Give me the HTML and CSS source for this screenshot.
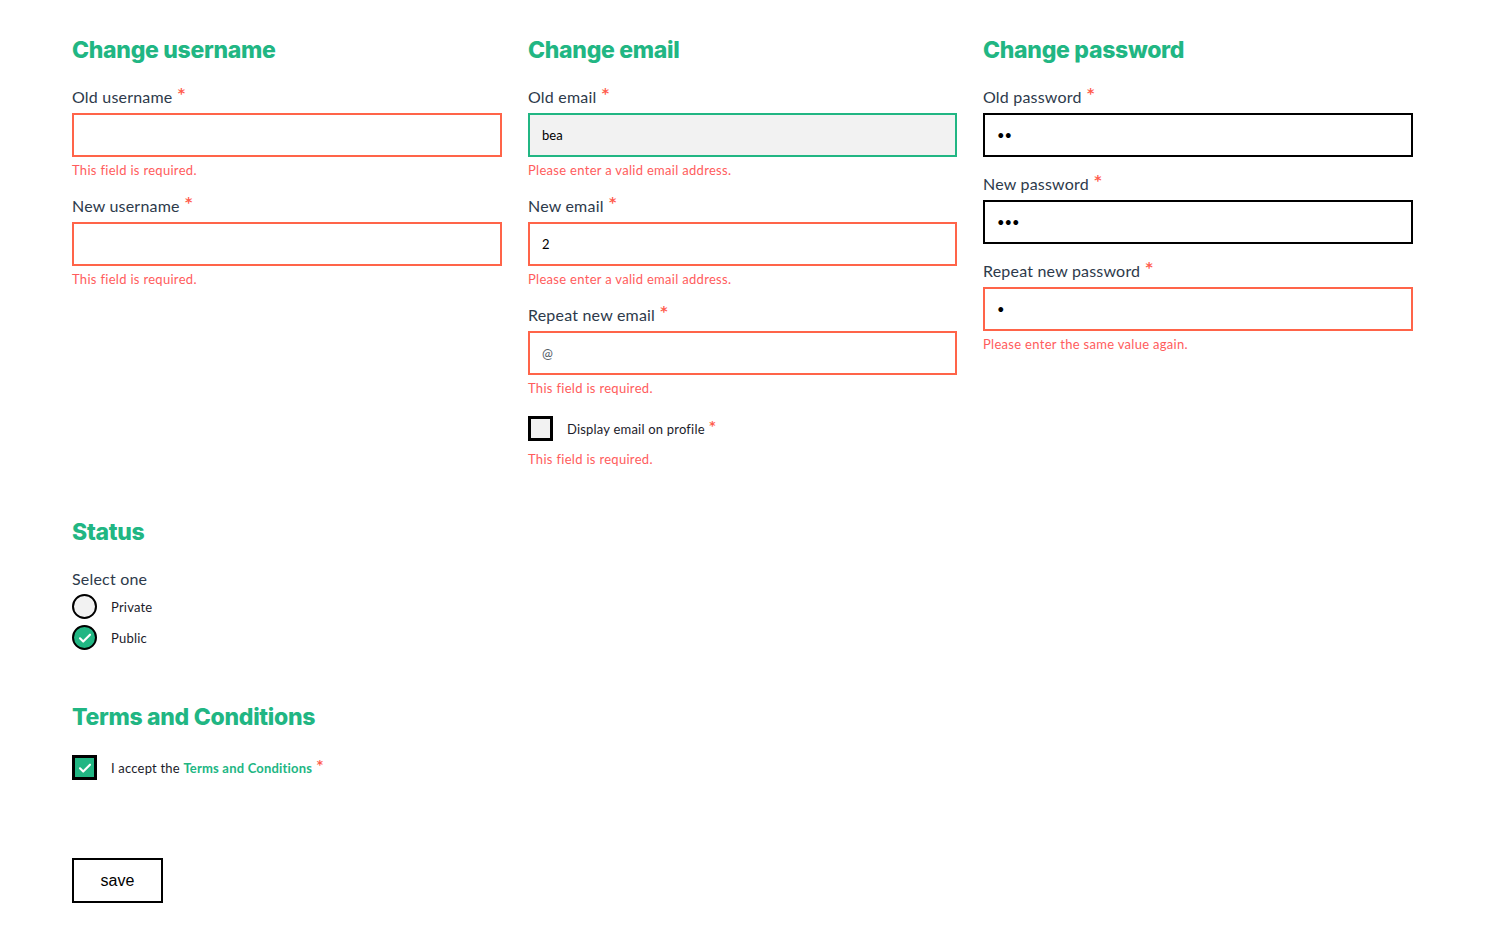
FILE: index.html
```html
<!DOCTYPE html>
<html lang="en">
<head>
<meta charset="utf-8">
<title>Account settings</title>
<link rel="stylesheet" href="styles.css">
</head>
<body>
<form class="page">
  <div class="columns">
    <section class="col">
      <h2 class="title">Change username</h2>
      <div class="field">
        <label class="label">Old username <span class="req">*</span></label>
        <input class="input input-error" type="text">
        <div class="error">This field is required.</div>
      </div>
      <div class="field">
        <label class="label">New username <span class="req">*</span></label>
        <input class="input input-error" type="text">
        <div class="error">This field is required.</div>
      </div>
    </section>
    <section class="col">
      <h2 class="title">Change email</h2>
      <div class="field">
        <label class="label">Old email <span class="req">*</span></label>
        <input class="input input-valid" type="text" value="bea">
        <div class="error">Please enter a valid email address.</div>
      </div>
      <div class="field">
        <label class="label">New email <span class="req">*</span></label>
        <input class="input input-error" type="text" value="2">
        <div class="error">Please enter a valid email address.</div>
      </div>
      <div class="field">
        <label class="label">Repeat new email <span class="req">*</span></label>
        <input class="input input-error" type="text" placeholder="@">
        <div class="error">This field is required.</div>
      </div>
      <div class="field check-field">
        <label class="check-row">
          <span class="box"></span>
          <span class="check-text">Display email on profile <span class="req">*</span></span>
        </label>
        <div class="error error-check">This field is required.</div>
      </div>
    </section>
    <section class="col">
      <h2 class="title">Change password</h2>
      <div class="field">
        <label class="label">Old password <span class="req">*</span></label>
        <input class="input input-plain" type="password" value="ab">
      </div>
      <div class="field">
        <label class="label">New password <span class="req">*</span></label>
        <input class="input input-plain" type="password" value="abc">
      </div>
      <div class="field">
        <label class="label">Repeat new password <span class="req">*</span></label>
        <input class="input input-error" type="password" value="a">
        <div class="error">Please enter the same value again.</div>
      </div>
    </section>
  </div>

  <section class="block status">
    <h2 class="title">Status</h2>
    <div class="label">Select one</div>
    <div class="radios">
      <label class="radio-row">
        <span class="radio"></span>
        <span class="check-text">Private</span>
      </label>
      <label class="radio-row">
        <span class="radio radio-on">
          <svg viewBox="0 0 24 24" width="16" height="16"><path d="M4.5 12.5l4.8 4.8L19.5 7" fill="none" stroke="#fff" stroke-width="3.2" stroke-linecap="round" stroke-linejoin="round"/></svg>
        </span>
        <span class="check-text">Public</span>
      </label>
    </div>
  </section>

  <section class="block terms">
    <h2 class="title">Terms and Conditions</h2>
    <label class="check-row">
      <span class="box box-on">
        <svg viewBox="0 0 24 24" width="16" height="16"><path d="M4.5 12.5l4.8 4.8L19.5 7" fill="none" stroke="#fff" stroke-width="3.2" stroke-linecap="round" stroke-linejoin="round"/></svg>
      </span>
      <span class="check-text">I accept the <a class="link" href="#">Terms and Conditions</a> <span class="req">*</span></span>
    </label>
  </section>

  <div class="actions">
    <button class="save" type="button">save</button>
  </div>
</form>
</body>
</html>
```
FILE: styles.css
```css
html, body {
  margin: 0;
  padding: 0;
  background: #ffffff;
}

body {
  font-family: "Lato", "Noto Sans", sans-serif;
  color: #2d3a4b;
}

.page {
  padding: 35px 0 40px 72px;
}

.columns {
  display: grid;
  grid-template-columns: 430px 429px 430px;
  column-gap: 26px;
  align-items: start;
}

.title {
  margin: 0 0 22px 0;
  font-family: "Inter", "Lato", sans-serif;
  font-size: 23px;
  line-height: 30px;
  font-weight: 800;
  color: #21b683;
  letter-spacing: -0.3px;
}

.field {
  display: flex;
  flex-direction: column;
  margin-bottom: 17px;
}

.field:last-child {
  margin-bottom: 0;
}

.label {
  display: block;
  font-size: 16px;
  line-height: 20px;
  margin-bottom: 6px;
  color: #2d3a4b;
  letter-spacing: 0.2px;
}

.req {
  color: #ff5c4d;
  font-family: "DejaVu Sans", sans-serif;
  font-size: 14px;
  line-height: 0;
  font-weight: 700;
  position: relative;
  top: -5px;
  margin-left: 1px;
}

.check-text .req {
  font-size: 12px;
  top: -4px;
}

.input {
  box-sizing: border-box;
  width: 100%;
  height: 44px;
  padding: 0 12px;
  border: 2px solid #000;
  background: #fff;
  font-family: "Lato", "Noto Sans", sans-serif;
  font-size: 13px;
  color: #000;
  outline: none;
  margin: 0;
}

.input::placeholder {
  color: #555c66;
}

.input-error {
  border-color: #ff6449;
}

.input-valid {
  border-color: #21b683;
  background: #f2f2f2;
}

.input-plain {
  border-color: #000;
}

.error {
  margin-top: 5px;
  font-size: 13px;
  line-height: 17px;
  color: #ff5c5c;
  letter-spacing: 0.3px;
}

.check-field {
  padding-top: 2px;
}

.check-row {
  display: flex;
  align-items: center;
  gap: 14px;
  cursor: pointer;
}

.box {
  box-sizing: border-box;
  width: 25px;
  height: 25px;
  border: 3px solid #000;
  background: #f2f2f2;
  display: flex;
  align-items: center;
  justify-content: center;
  flex: none;
}

.box-on {
  background: #21b683;
}

.check-text {
  font-size: 13px;
  line-height: 18px;
  color: #1b1b2a;
  letter-spacing: 0.2px;
}

.error-check {
  margin-top: 10px;
}

.block {
  margin-top: 49px;
}

.status .label {
  margin-bottom: 5px;
}

.status .title {
  margin-bottom: 22px;
}

.radios {
  display: flex;
  flex-direction: column;
  gap: 6px;
}

.radio-row {
  display: flex;
  align-items: center;
  gap: 14px;
  cursor: pointer;
}

.radio {
  box-sizing: border-box;
  width: 25px;
  height: 25px;
  border-radius: 50%;
  border: 2.5px solid #000;
  background: #f2f2f2;
  display: flex;
  align-items: center;
  justify-content: center;
  flex: none;
}

.radio-on {
  background: #21b683;
}

.terms {
  margin-top: 52px;
}

.terms .title {
  margin-bottom: 23px;
}

.link {
  color: #21b683;
  font-weight: 700;
  text-decoration: none;
}

.actions {
  margin-top: 78px;
}

.save {
  box-sizing: border-box;
  width: 91px;
  height: 45px;
  border: 2px solid #000;
  background: #fff;
  font-family: "Liberation Sans", Arial, sans-serif;
  font-size: 16px;
  color: #000;
  cursor: pointer;
  padding: 0;
}
```
